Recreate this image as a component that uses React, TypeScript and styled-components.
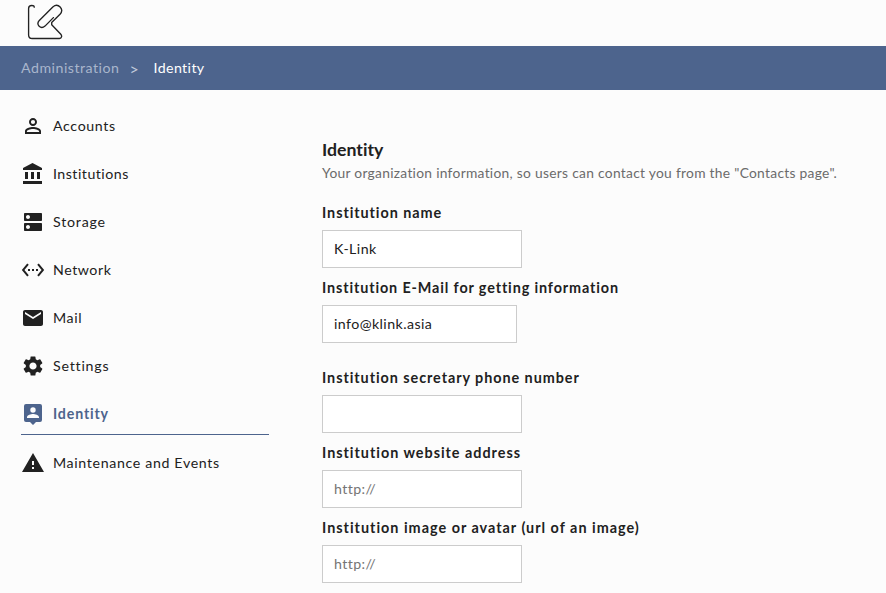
import React from "react";
import styled, { createGlobalStyle } from "styled-components";
import type { IconType } from "react-icons";
import { MdPersonOutline, MdDns, MdSettingsEthernet, MdEmail, MdSettings, MdWarning } from "react-icons/md";

const ink = "#212121";
const blue = "#4d648d";

const GlobalStyle = createGlobalStyle`
  * { box-sizing: border-box; }
  body {
    margin: 0;
    background: #fcfcfc;
    color: ${ink};
    font-family: Lato, "Noto Sans", sans-serif;
    font-size: 14.2px;
    line-height: 20px;
    font-variant-ligatures: none;
    overflow: hidden;
  }
`;

const Page = styled.div`
  height: 593px;
  display: flex;
  flex-direction: column;
  overflow: hidden;
`;

const TopBar = styled.header`
  flex: none;
  height: 46px;
  padding: 3px 0 0 26px;
`;

const Breadcrumb = styled.nav`
  flex: none;
  height: 44px;
  padding: 0 21px;
  display: flex;
  align-items: center;
  background: ${blue};
  color: #a9b6cc;
`;

const Crumb = styled.span<{ $current?: boolean; $spacing: number }>`
  color: ${(p) => (p.$current ? "#ffffff" : "inherit")};
  letter-spacing: ${(p) => p.$spacing}px;
`;

const Separator = styled.span`
  width: 34px;
  padding: 1px 0 0 10px;
  font-size: 16px;
  color: #c1cadb;
`;

const Body = styled.div`
  display: flex;
  padding-left: 21px;
`;

const Sidebar = styled.ul`
  flex: none;
  width: 248px;
  margin: 0 53px 0 0;
  padding: 16px 0 0;
  list-style: none;
  display: flex;
  flex-direction: column;
  gap: 8px;
`;

const NavItem = styled.li<{ $active?: boolean; $spacing: number }>`
  height: ${(p) => (p.$active ? 41 : 40)}px;
  border-bottom: ${(p) => (p.$active ? `1px solid ${blue}` : "none")};
  color: ${(p) => (p.$active ? blue : ink)};
  font-weight: ${(p) => (p.$active ? 700 : 400)};
  letter-spacing: ${(p) => p.$spacing}px;
  display: flex;
  align-items: center;
  gap: 8px;
  svg { flex: none; }
`;

const Content = styled.main`
  padding-top: 50px;
`;

const Title = styled.h1`
  margin: 0;
  font-size: 17.7px;
  line-height: 20px;
  font-weight: 700;
`;

const Description = styled.p`
  margin: 3px 0 20px;
  font-size: 13.8px;
  line-height: 20px;
  letter-spacing: 0.29px;
  color: #6b6b6b;
  white-space: nowrap;
`;

const Field = styled.div<{ $gap: number }>`
  margin-bottom: ${(p) => p.$gap}px;
`;

const Label = styled.label<{ $spacing: number }>`
  display: block;
  height: 27px;
  font-size: 14.4px;
  font-weight: 700;
  letter-spacing: ${(p) => p.$spacing}px;
  white-space: nowrap;
`;

const Input = styled.input<{ $width: number }>`
  display: block;
  width: ${(p) => p.$width}px;
  height: 38px;
  padding: 0 11px 2px;
  border: 1px solid #cccccc;
  border-radius: 0;
  background: #ffffff;
  color: ${ink};
  font: inherit;
  letter-spacing: 0.42px;
  outline: none;
  &::placeholder { color: #757575; opacity: 1; }
`;

const Logo = () => (
  <svg width="38" height="38" viewBox="26 3 38 38" fill="none" stroke="#222" strokeWidth="1.35" strokeLinecap="round" strokeLinejoin="round">
    <path d="M34.2 7.2Q34.3 5.5 31.8 5.5Q28.6 5.5 28.6 8.5V35Q28.6 38.5 32.2 38.5H59.5C61.8 38.5 62.2 35.7 60.8 34.2L51.7 24.8V22.6L60 14.3C64.5 9.4 58.3 2.4 52.8 6.9L39.3 20.4C35.6 24.8 40.7 29.7 45 26.1L53.4 17.6" />
  </svg>
);

const BankIcon: IconType = ({ size }) => (
  <svg width={size} height={size} viewBox="0 0 24 24" fill="currentColor">
    <path d="M4 10v7h3v-7H4zm6 0v7h3v-7h-3zM2 22h19v-3H2v3zm14-12v7h3v-7h-3zM11.5 1 2 6v2h19V6l-9.5-5z" />
  </svg>
);

const PersonBadgeIcon: IconType = ({ size }) => (
  <svg width={size} height={size} viewBox="0 0 24 24" fill="currentColor">
    <path d="M19 2H5a2 2 0 0 0-2 2v14a2 2 0 0 0 2 2h4l3 3 3-3h4a2 2 0 0 0 2-2V4a2 2 0 0 0-2-2zm-7 3.3a2.7 2.7 0 1 1 0 5.4 2.7 2.7 0 0 1 0-5.4zM18 16H6v-.9c0-2 4-3.1 6-3.1s6 1.1 6 3.1v.9z" />
  </svg>
);

const navItems: { label: string; Icon: IconType; spacing: number; active?: boolean }[] = [
  { label: "Accounts", Icon: MdPersonOutline, spacing: 0.64 },
  { label: "Institutions", Icon: BankIcon, spacing: 0.48 },
  { label: "Storage", Icon: MdDns, spacing: 0.78 },
  { label: "Network", Icon: MdSettingsEthernet, spacing: 0.54 },
  { label: "Mail", Icon: MdEmail, spacing: 0.62 },
  { label: "Settings", Icon: MdSettings, spacing: 0.78 },
  { label: "Identity", Icon: PersonBadgeIcon, spacing: 0.84, active: true },
  { label: "Maintenance and Events", Icon: MdWarning, spacing: 0.65 },
];

const fields = [
  { id: "name", label: "Institution name", spacing: 0.93, value: "K-Link", width: 200, gap: 10 },
  { id: "email", label: "Institution E-Mail for getting information", spacing: 0.87, value: "info@klink.asia", width: 195, gap: 25 },
  { id: "phone", label: "Institution secretary phone number", spacing: 0.94, width: 200, gap: 10 },
  { id: "website", label: "Institution website address", spacing: 0.98, placeholder: "http://", width: 200, gap: 10 },
  { id: "image", label: "Institution image or avatar (url of an image)", spacing: 1, placeholder: "http://", width: 200, gap: 10 },
];

export default function App() {
  return (
    <Page>
      <GlobalStyle />
      <TopBar><Logo /></TopBar>
      <Breadcrumb>
        <Crumb $spacing={0.5}>Administration</Crumb>
        <Separator>&gt;</Separator>
        <Crumb $current $spacing={0.4}>Identity</Crumb>
      </Breadcrumb>
      <Body>
        <Sidebar>
          {navItems.map(({ label, Icon, spacing, active }) => (
            <NavItem key={label} $active={active} $spacing={spacing}>
              <Icon size={24} />
              {label}
            </NavItem>
          ))}
        </Sidebar>
        <Content>
          <Title>Identity</Title>
          <Description>Your organization information, so users can contact you from the "Contacts page".</Description>
          {fields.map((f) => (
            <Field key={f.id} $gap={f.gap}>
              <Label htmlFor={f.id} $spacing={f.spacing}>{f.label}</Label>
              <Input id={f.id} $width={f.width} defaultValue={f.value} placeholder={f.placeholder} />
            </Field>
          ))}
        </Content>
      </Body>
    </Page>
  );
}
